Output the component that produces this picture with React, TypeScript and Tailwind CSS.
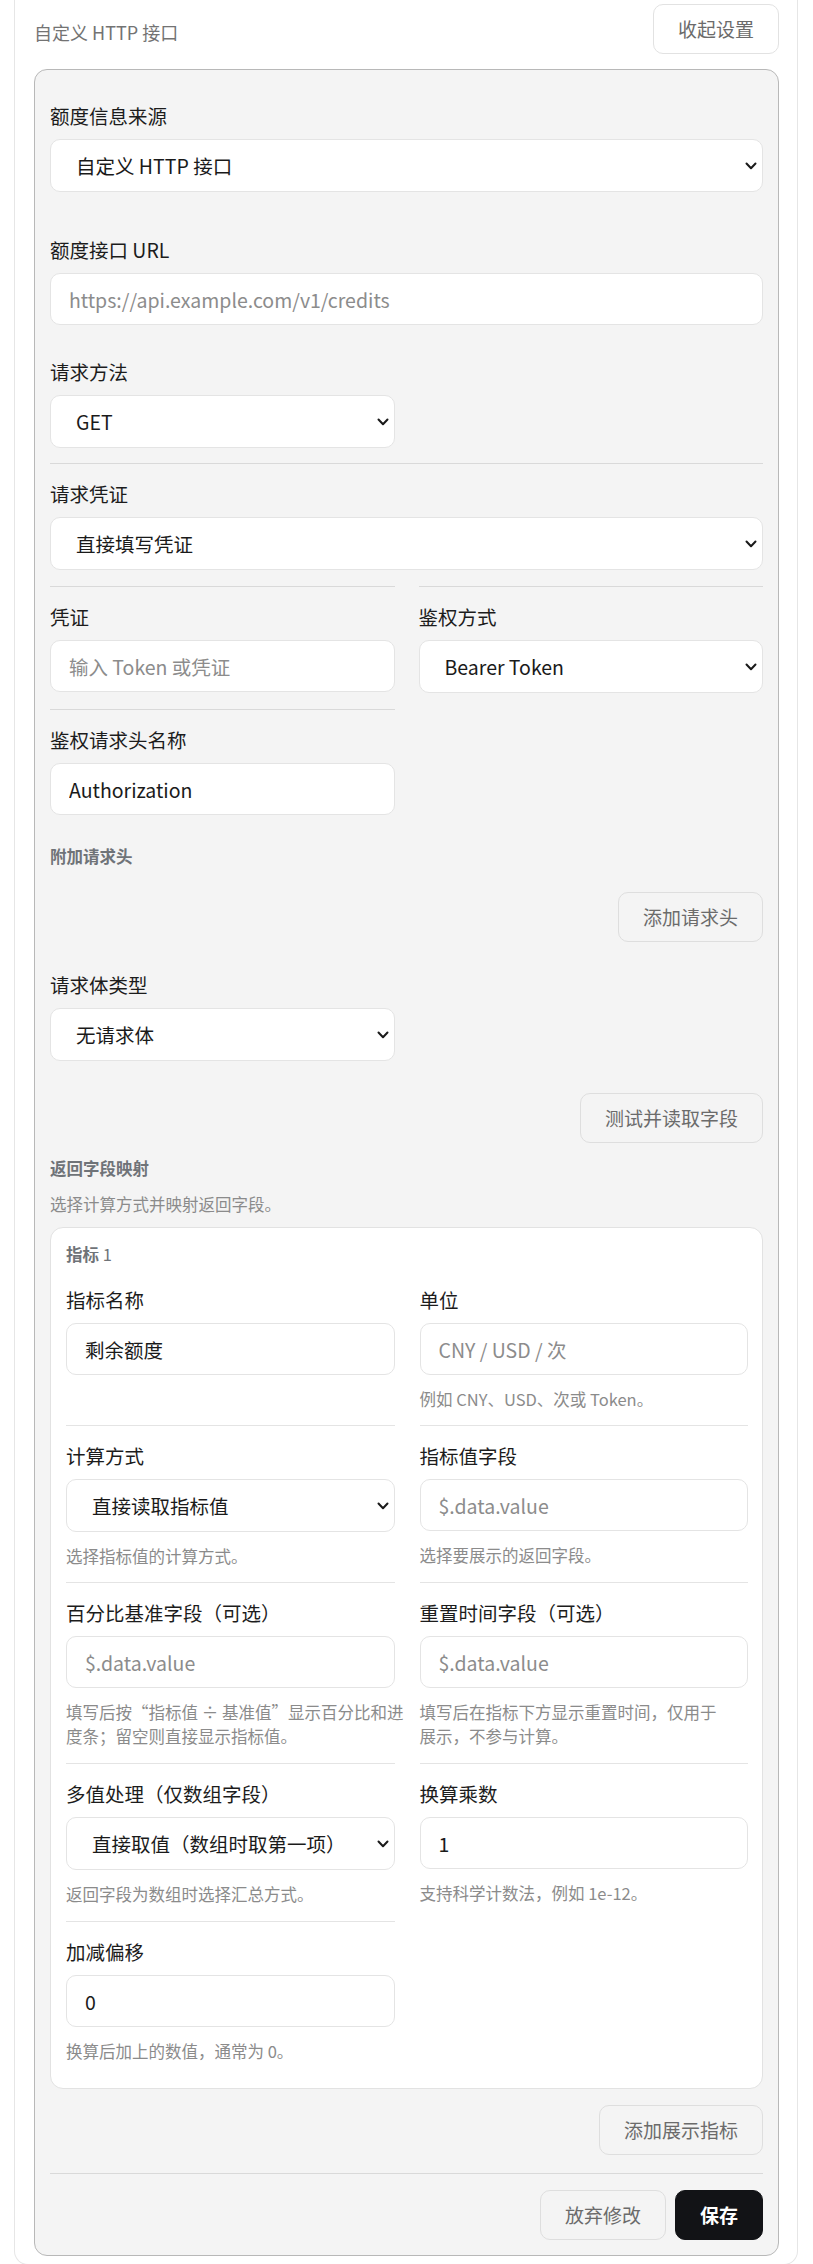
import React from "react"

function Chevron() {
  return (
    <svg
      className="pointer-events-none absolute right-[6px] top-1/2 -translate-y-1/2"
      width="12"
      height="8"
      viewBox="0 0 12 8"
      fill="none"
    >
      <path d="M1.5 1.5 6 6.3l4.5-4.8" stroke="#1a1a1a" strokeWidth="2" strokeLinecap="round" strokeLinejoin="round" />
    </svg>
  )
}

function Select({ value }: { value: string }) {
  return (
    <div className="relative">
      <select
        defaultValue={value}
        className="h-[53px] w-full appearance-none rounded-[10px] border border-[#e4e4e4] bg-white pl-[25px] pr-[30px] text-[19.5px] text-[#1a1a1a] outline-none"
      >
        <option value={value}>{value}</option>
      </select>
      <Chevron />
    </div>
  )
}

function Input({ value, placeholder }: { value?: string; placeholder?: string }) {
  return (
    <input
      defaultValue={value}
      placeholder={placeholder}
      className="h-[52px] w-full rounded-[10px] border border-[#e4e4e4] bg-white px-[18px] text-[19.5px] text-[#1a1a1a] outline-none placeholder:text-[#8c8c8c]"
    />
  )
}

function Field({
  label,
  children,
  hint,
}: {
  label: string
  children: React.ReactNode
  hint?: React.ReactNode
}) {
  return (
    <div>
      <div className="text-[19.5px] leading-[28px] text-[#1c1c1c]">{label}</div>
      <div className="mt-[9px]">{children}</div>
      {hint && <div className="mt-[12px] text-[16.5px] leading-[24px] text-[#8b8b8b]">{hint}</div>}
    </div>
  )
}

function GhostButton({ children }: { children: React.ReactNode }) {
  return (
    <button className="h-[50px] rounded-[10px] border border-[#dedede] bg-transparent px-[24px] text-[19px] text-[#6b6b6b]">
      {children}
    </button>
  )
}

function SubHeading({ children }: { children: React.ReactNode }) {
  return <div className="text-[16.5px] font-bold leading-[24px] text-[#6f7378]">{children}</div>
}

export default function App() {
  return (
    <div className="bg-white pb-[2px] font-['Noto_Sans_CJK_SC',sans-serif]">
      <div className="ml-[14px] mr-[15px] rounded-b-[14px] border-x border-b border-[#e6e6e6] pl-[19px] pr-[18px] pt-[4px] pb-[8px]">
        {/* header */}
        <div className="flex items-center justify-between">
          <span className="mt-[6px] text-[18px] text-[#737373]">自定义 HTTP 接口</span>
          <button className="h-[50px] rounded-[10px] border border-[#e2e2e2] bg-white px-[24px] text-[19px] text-[#6b6b6b]">
            收起设置
          </button>
        </div>

        <div className="mt-[15px] rounded-[13px] border border-[#b8b8b8] bg-[#f4f4f4] px-[15px] pt-[32px] pb-[15px]">
          <Field label="额度信息来源">
            <Select value="自定义 HTTP 接口" />
          </Field>

          <div className="mt-[44px]">
            <Field label="额度接口 URL">
              <Input placeholder="https://api.example.com/v1/credits" />
            </Field>
          </div>

          <div className="mt-[33px] grid grid-cols-2 gap-x-[24px] pb-[15px]">
            <Field label="请求方法">
              <Select value="GET" />
            </Field>
          </div>

          <div className="border-t border-[#d9d9d9] pt-[16px] pb-[16px]">
            <Field label="请求凭证">
              <Select value="直接填写凭证" />
            </Field>
          </div>

          <div className="grid grid-cols-2 gap-x-[24px]">
            <div className="border-t border-[#d9d9d9] pt-[16px] pb-[16px]">
              <Field label="凭证">
                <Input placeholder="输入 Token 或凭证" />
              </Field>
            </div>
            <div className="border-t border-[#d9d9d9] pt-[16px] pb-[16px]">
              <Field label="鉴权方式">
                <Select value="Bearer Token" />
              </Field>
            </div>
            <div className="border-t border-[#d9d9d9] pt-[16px]">
              <Field label="鉴权请求头名称">
                <Input value="Authorization" />
              </Field>
            </div>
          </div>

          <div className="mt-[29px]">
            <SubHeading>附加请求头</SubHeading>
          </div>
          <div className="mt-[24px] flex justify-end">
            <GhostButton>添加请求头</GhostButton>
          </div>

          <div className="mt-[29px] grid grid-cols-2 gap-x-[24px]">
            <Field label="请求体类型">
              <Select value="无请求体" />
            </Field>
          </div>

          <div className="mt-[32px] flex justify-end">
            <GhostButton>测试并读取字段</GhostButton>
          </div>

          <div className="mt-[13px]">
            <SubHeading>返回字段映射</SubHeading>
          </div>
          <div className="mt-[12px] text-[16.5px] leading-[24px] text-[#8b8b8b]">选择计算方式并映射返回字段。</div>

          {/* metric card */}
          <div className="mt-[11px] rounded-[13px] border border-[#e2e2e2] bg-white pl-[15px] pr-[14px] pt-[14px] pb-[11px]">
            <div className="text-[16.5px] leading-[24px] text-[#6f7378]">
              <span className="font-bold">指标</span> 1
            </div>

            <div className="mt-[20px] grid grid-cols-2 gap-x-[25px]">
              <div className="pb-[14px]">
                <Field label="指标名称">
                  <Input value="剩余额度" />
                </Field>
              </div>
              <div className="pb-[14px]">
                <Field label="单位" hint="例如 CNY、USD、次或 Token。">
                  <Input placeholder="CNY / USD / 次" />
                </Field>
              </div>

              <div className="border-t border-[#e4e4e4] pt-[16px] pb-[14px]">
                <Field label="计算方式" hint="选择指标值的计算方式。">
                  <Select value="直接读取指标值" />
                </Field>
              </div>
              <div className="border-t border-[#e4e4e4] pt-[16px] pb-[14px]">
                <Field label="指标值字段" hint="选择要展示的返回字段。">
                  <Input placeholder="$.data.value" />
                </Field>
              </div>

              <div className="border-t border-[#e4e4e4] pt-[16px] pb-[15px]">
                <Field
                  label="百分比基准字段（可选）"
                  hint={
                    <>
                      <span className="block whitespace-nowrap">填写后按“指标值 ÷ 基准值”显示百分比和进</span>
                      <span className="block whitespace-nowrap">度条；留空则直接显示指标值。</span>
                    </>
                  }
                >
                  <Input placeholder="$.data.value" />
                </Field>
              </div>
              <div className="border-t border-[#e4e4e4] pt-[16px] pb-[15px]">
                <Field
                  label="重置时间字段（可选）"
                  hint={
                    <>
                      <span className="block whitespace-nowrap">填写后在指标下方显示重置时间，仅用于</span>
                      <span className="block whitespace-nowrap">展示，不参与计算。</span>
                    </>
                  }
                >
                  <Input placeholder="$.data.value" />
                </Field>
              </div>

              <div className="border-t border-[#e4e4e4] pt-[16px] pb-[15px]">
                <Field label="多值处理（仅数组字段）" hint="返回字段为数组时选择汇总方式。">
                  <Select value="直接取值（数组时取第一项）" />
                </Field>
              </div>
              <div className="border-t border-[#e4e4e4] pt-[16px] pb-[15px]">
                <Field label="换算乘数" hint="支持科学计数法，例如 1e-12。">
                  <Input value="1" />
                </Field>
              </div>

              <div className="border-t border-[#e4e4e4] pt-[16px] pb-[14px]">
                <Field label="加减偏移" hint="换算后加上的数值，通常为 0。">
                  <Input value="0" />
                </Field>
              </div>
              <div />
            </div>
          </div>

          <div className="mt-[16px] flex justify-end">
            <GhostButton>添加展示指标</GhostButton>
          </div>

          <div className="mt-[18px] flex justify-end gap-[9px] border-t border-[#d9d9d9] pt-[16px]">
            <GhostButton>放弃修改</GhostButton>
            <button className="h-[50px] rounded-[10px] border border-[#121316] bg-[#121316] px-[24px] text-[19px] font-bold text-white">
              保存
            </button>
          </div>
        </div>
      </div>
    </div>
  )
}
